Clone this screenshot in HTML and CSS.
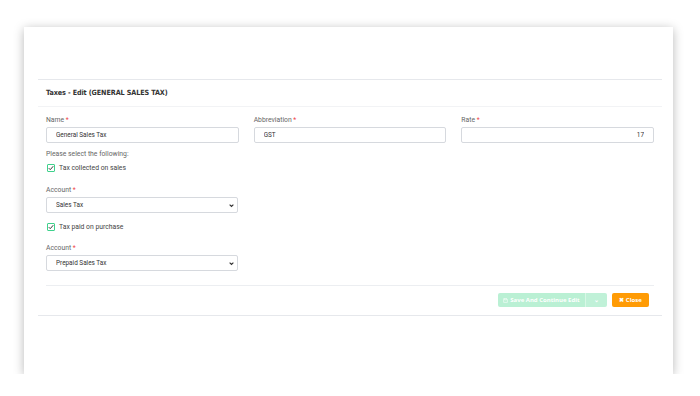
FILE: index.html
```html
<!DOCTYPE html>
<html lang="en">
<head>
    <meta charset="UTF-8"/>
    <title>Taxes - Edit</title>
    <link rel="stylesheet" href="styles.css">
</head>
<body>
<div class="page">
    <div class="card">
        <div class="panel">
            <div class="panelHead">Taxes - Edit (GENERAL SALES TAX)</div>
            <form class="panelBody">
                <div class="row3">
                    <div class="field">
                        <label class="lbl">Name <span class="req">*</span></label>
                        <input class="ipt" type="text" value="General Sales Tax"/>
                    </div>
                    <div class="field">
                        <label class="lbl">Abbreviation <span class="req">*</span></label>
                        <input class="ipt" type="text" value="GST"/>
                    </div>
                    <div class="field">
                        <label class="lbl">Rate <span class="req">*</span></label>
                        <input class="ipt num" type="text" value="17"/>
                    </div>
                </div>

                <div class="hint">Please select the following:</div>

                <label class="chk">
                    <span class="box">
                        <svg viewBox="0 0 8 8" width="6" height="6"><path d="M1 4.2 L3 6.2 L7 1.6" fill="none" stroke="#333" stroke-width="1.3"/></svg>
                    </span>
                    Tax collected on sales
                </label>
                <div class="field half gapA">
                    <label class="lbl">Account <span class="req">*</span></label>
                    <div class="sel">
                        <select class="ipt">
                            <option>Sales Tax</option>
                        </select>
                        <svg class="caret" viewBox="0 0 8 8" width="5" height="5"><path d="M1 2.5 L4 5.5 L7 2.5" fill="none" stroke="#333" stroke-width="1.8"/></svg>
                    </div>
                </div>

                <label class="chk gapB">
                    <span class="box">
                        <svg viewBox="0 0 8 8" width="6" height="6"><path d="M1 4.2 L3 6.2 L7 1.6" fill="none" stroke="#333" stroke-width="1.3"/></svg>
                    </span>
                    Tax paid on purchase
                </label>
                <div class="field half gapC">
                    <label class="lbl">Account <span class="req">*</span></label>
                    <div class="sel">
                        <select class="ipt">
                            <option>Prepaid Sales Tax</option>
                        </select>
                        <svg class="caret" viewBox="0 0 8 8" width="5" height="5"><path d="M1 2.5 L4 5.5 L7 2.5" fill="none" stroke="#333" stroke-width="1.8"/></svg>
                    </div>
                </div>

                <div class="foot">
                    <div class="btnGroup">
                        <button type="button" class="btnSave">
                            <svg viewBox="0 0 8 8" width="5" height="5"><path d="M1 1 H6 L7 2 V7 H1 Z M2.5 1 V3 H5.5 V1" fill="none" stroke="#fff" stroke-width="0.9"/></svg>
                            Save And Continue Edit
                        </button>
                        <button type="button" class="btnDrop">&#8964;</button>
                    </div>
                    <button type="button" class="btnClose">&#10006; Close</button>
                </div>
            </form>
        </div>
    </div>
</div>
</body>
</html>
```

FILE: styles.css
```css
body {
    margin: 0;
    background-color: #ffffff;
    font-family: Roboto, "Liberation Sans", sans-serif;
}

.page {
    padding: 27px 0 0 24px;
}

.card {
    width: 649px;
    height: 347px;
    background-color: #ffffff;
    box-shadow: 0 2px 10px rgba(0, 0, 0, 0.28);
    padding-top: 52px;
    box-sizing: border-box;
}

.panel {
    margin: 0 11px 0 14px;
    border-top: 1px solid #e6e8ec;
    border-bottom: 1px solid #e6e8ec;
}

.panelHead {
    height: 26px;
    line-height: 26px;
    padding-left: 8px;
    border-bottom: 1px solid #f2f3f5;
    font-family: "DejaVu Sans Condensed", "Liberation Sans Narrow", sans-serif;
    font-size: 7.2px;
    font-weight: 600;
    letter-spacing: -0.1px;
    color: #333;
}

.panelBody {
    padding: 8px 8px 0 8px;
    margin: 0;
}

.row3 {
    display: grid;
    grid-template-columns: 1fr 1fr 1fr;
    column-gap: 15px;
}

.field {
    display: flex;
    flex-direction: column;
}

.half {
    width: 192px;
}

.lbl {
    font-size: 6.8px;
    line-height: 10px;
    height: 10px;
    margin-bottom: 2px;
    color: #666;
}

.req {
    color: #f0444a;
}

.ipt {
    height: 16px;
    box-sizing: border-box;
    border: 1px solid #d6d9de;
    border-radius: 2px;
    padding: 0 9px;
    font-family: Roboto, "Liberation Sans", sans-serif;
    font-size: 6.4px;
    color: #333;
    background-color: #fff;
    outline: none;
    width: 100%;
}

.num {
    text-align: right;
}

.sel {
    position: relative;
}

.sel select {
    appearance: none;
    -webkit-appearance: none;
    display: block;
}

.caret {
    position: absolute;
    right: 4px;
    top: 6px;
}

.hint {
    margin-top: 6px;
    font-size: 6.8px;
    line-height: 10px;
    color: #666;
}

.chk {
    display: flex;
    align-items: center;
    gap: 4px;
    margin-top: 3px;
    height: 11px;
    font-size: 6.8px;
    color: #444;
}

.box {
    width: 8px;
    height: 8px;
    box-sizing: border-box;
    border: 1px solid #3fd18c;
    border-radius: 1px;
    display: flex;
    align-items: center;
    justify-content: center;
    margin-left: 1px;
}

.gapA {
    margin-top: 12px;
}

.gapB {
    margin-top: 8px;
}

.gapC {
    margin-top: 11px;
}

.foot {
    margin-top: 14px;
    border-top: 1px solid #eceef1;
    padding: 7px 5px 8px 0;
    display: flex;
    justify-content: flex-end;
    gap: 5px;
}

.btnGroup {
    display: flex;
}

.btnSave,
.btnDrop,
.btnClose {
    height: 14px;
    border: 0;
    padding: 0;
    font-family: "Open Sans", "Liberation Sans", sans-serif;
    font-size: 6px;
    font-weight: bold;
    color: #fff;
    display: flex;
    align-items: center;
    justify-content: center;
    gap: 2px;
}

.btnSave {
    width: 88px;
    background-color: #baf0d4;
    border-radius: 2px 0 0 2px;
    border-right: 1px solid #d8f7e6;
}

.btnDrop {
    width: 21px;
    background-color: #c0f1d8;
    border-radius: 0 2px 2px 0;
}

.btnClose {
    width: 37px;
    background-color: #ff9b05;
    border-radius: 2px;
}
```
